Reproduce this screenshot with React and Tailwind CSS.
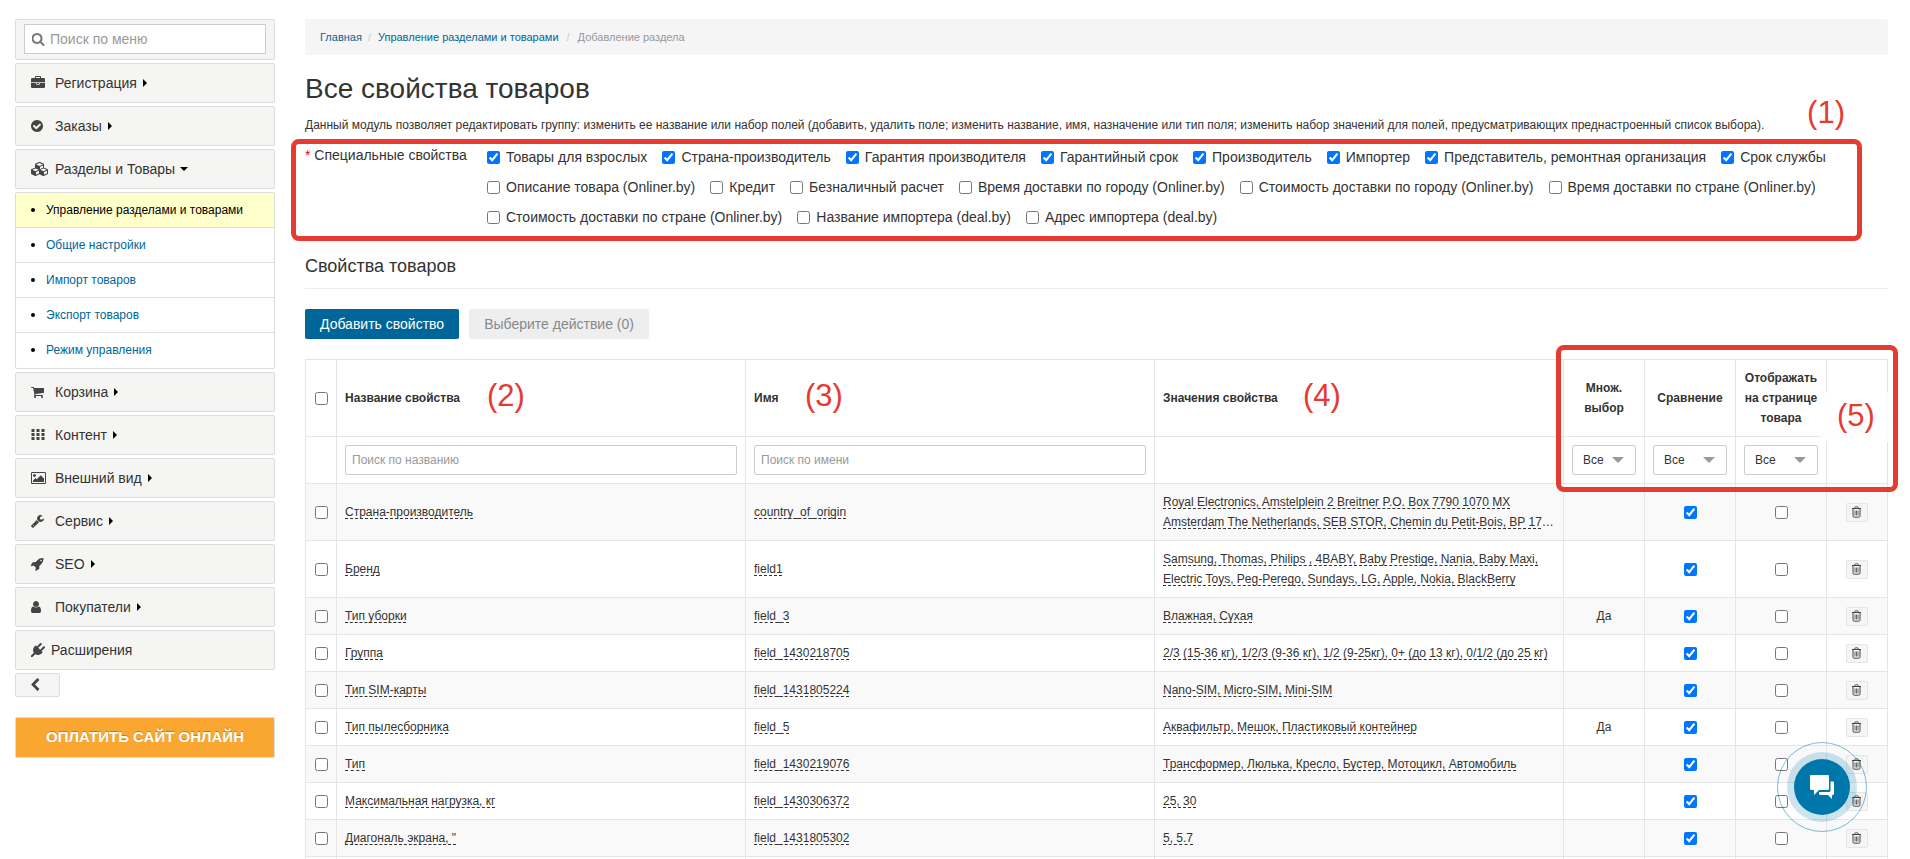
import { useState } from "react";

// иконки меню, сетка 1792 на кегль
const icons = {
  search: {
    box: "128 0 1792 1792",
    d: "M1216 832q0-185-131.5-316.5t-316.5-131.5-316.5 131.5-131.5 316.5 131.5 316.5 316.5 131.5 316.5-131.5 131.5-316.5zm512 832q0 52-38 90t-90 38q-54 0-90-38l-343-342q-179 124-399 124-143 0-273.5-55.5t-225-150-150-225-55.5-273.5 55.5-273.5 150-225 225-150 273.5-55.5 273.5 55.5 225 150 150 225 55.5 273.5q0 220-124 399l343 343q37 37 37 90z",
  },
  briefcase: {
    box: "0 0 1792 1792",
    d: "M640 256h512v-128h-512v128zm1152 640v480q0 66-47 113t-113 47h-1472q-66 0-113-47t-47-113v-480h672v160q0 26 19 45t45 19h320q26 0 45-19t19-45v-160h672zm-768 0v128h-256v-128h256zm768-480v384h-1792v-384q0-66 47-113t113-47h352v-160q0-40 28-68t68-28h576q40 0 68 28t28 68v160h352q66 0 113 47t47 113z",
  },
  check: {
    box: "128 0 1792 1792",
    d: "M1412 734q0-28-18-46l-91-90q-19-19-45-19t-45 19l-408 407-226-226q-19-19-45-19t-45 19l-91 90q-18 18-18 46 0 27 18 45l362 362q19 19 45 19 27 0 46-19l543-543q18-18 18-45zm252 162q0 209-103 385.5t-279.5 279.5-385.5 103-385.5-103-279.5-279.5-103-385.5 103-385.5 279.5-279.5 385.5-103 385.5 103 279.5 279.5 103 385.5z",
  },
  cubes: {
    box: "0 0 2304 1792",
    d: "M640 1632l384-192v-314l-384 164v342zm-64-454l404-173-404-173-404 173zm1088 454l384-192v-314l-384 164v342zm-64-454l404-173-404-173-404 173zm-448-293l384-165v-266l-384 164v267zm-64-379l441-189-441-189-441 189zm1088 518v416q0 36-19 67t-52 47l-448 224q-25 14-57 14t-57-14l-448-224q-4-2-7-4-2 2-7 4l-448 224q-25 14-57 14t-57-14l-448-224q-33-16-52-47t-19-67v-416q0-38 21.5-70t56.5-48l434-186v-400q0-38 21.5-70t56.5-48l448-192q23-10 50-10t50 10l448 192q35 16 56.5 48t21.5 70v400l434 186q36 16 57 48t21 70z",
  },
  cart: {
    box: "64 0 1792 1792",
    d: "M704 1536q0 52-38 90t-90 38-90-38-38-90 38-90 90-38 90 38 38 90zm896 0q0 52-38 90t-90 38-90-38-38-90 38-90 90-38 90 38 38 90zm128-1088v512q0 24-16.5 42.5t-40.5 21.5l-1044 122q13 60 13 70 0 16-24 64h920q26 0 45 19t19 45-19 45-45 19h-1024q-26 0-45-19t-19-45q0-11 8-31.5t16-36 21.5-40 15.5-29.5l-177-823h-204q-26 0-45-19t-19-45 19-45 45-19h256q16 0 28.5 6.5t19.5 15.5 13 24.5 8 26 5.5 29.5 4.5 26h1201q26 0 45 19t19 45z",
  },
  grid: {
    box: "0 0 1792 1792",
    d: "M64 128h384v384h-384zM704 128h384v384h-384zM1344 128h384v384h-384zM64 640h384v384h-384zM704 640h384v384h-384zM1344 640h384v384h-384zM64 1152h384v384h-384zM704 1152h384v384h-384zM1344 1152h384v384h-384z",
  },
  picture: {
    box: "0 0 1920 1792",
    d: "M640 576q0 80-56 136t-136 56-136-56-56-136 56-136 136-56 136 56 56 136zm1024 384v448h-1408v-192l320-320 160 160 512-512zm96-704h-1600q-13 0-22.5 9.5t-9.5 22.5v1216q0 13 9.5 22.5t22.5 9.5h1600q13 0 22.5-9.5t9.5-22.5v-1216q0-13-9.5-22.5t-22.5-9.5zm160 32v1216q0 66-47 113t-113 47h-1600q-66 0-113-47t-47-113v-1216q0-66 47-113t113-47h1600q66 0 113 47t47 113z",
  },
  wrench: {
    box: "64 0 1792 1792",
    d: "M448 1472q0-26-19-45t-45-19-45 19-19 45 19 45 45 19 45-19 19-45zm644-420l-682 682q-37 37-90 37-52 0-91-37l-106-108q-38-36-38-90 0-53 38-91l681-681q39 98 114.5 173.5t173.5 114.5zm634-435q0 39-23 106-47 134-164.5 217.5t-258.5 83.5q-185 0-316.5-131.5t-131.5-316.5 131.5-316.5 316.5-131.5q58 0 121.5 16.5t107.5 46.5q16 11 16 28t-16 28l-293 169v224l193 107q5-3 79-48.5t135.5-81 70.5-35.5q15 0 23.5 10t8.5 25z",
  },
  rocket: {
    box: "64 0 1792 1792",
    d: "M1440 448q0-40-28-68t-68-28-68 28-28 68 28 68 68 28 68-28 28-68zm224-288q0 249-75.5 430.5t-253.5 360.5q-81 80-195 176l-20 379q-2 16-16 26l-384 224q-7 4-16 4-12 0-23-9l-64-64q-13-14-8-32l85-276-281-281-276 85q-3 1-9 1-14 0-23-9l-64-64q-17-19-5-39l224-384q10-14 26-16l379-20q96-114 176-195 188-187 358-258t431-71q14 0 24 9.5t10 22.5z",
  },
  user: {
    box: "256 0 1792 1792",
    d: "M1536 1399q0 109-62.5 187t-150.5 78h-854q-88 0-150.5-78t-62.5-187q0-85 8.5-160.5t31.5-152 58.5-131 94-89 134.5-34.5q131 128 313 128t313-128q76 0 134.5 34.5t94 89 58.5 131 31.5 152 8.5 160.5zm-256-887q0 159-112.5 271.5t-271.5 112.5-271.5-112.5-112.5-271.5 112.5-271.5 271.5-112.5 271.5 112.5 112.5 271.5z",
  },
  plug: {
    box: "0 0 1792 1792",
    d: "M1755 453q37 38 37 90.5t-37 90.5l-401 400 150 150-160 160q-163 163-389.5 186.5t-411.5-100.5l-362 362h-181v-181l362-362q-124-185-100.5-411.5t186.5-389.5l160-160 150 150 400-401q38-37 91-37t90 37 37 90.5-37 90.5l-400 401 234 234 401-400q38-37 91-37t90 37z",
  },
  left: {
    box: "256 0 1792 1792",
    d: "M1427 301l-531 531 531 531q19 19 19 45t-19 45l-166 166q-19 19-45 19t-45-19l-742-742q-19-19-19-45t19-45l742-742q19-19 45-19t45 19l166 166q19 19 19 45t-19 45z",
  },
};

const menuTop = [
  { label: "Регистрация", icon: "briefcase" },
  { label: "Заказы", icon: "check" },
  { label: "Разделы и Товары", icon: "cubes", open: true },
];

const subMenu = [
  "Управление разделами и товарами",
  "Общие настройки",
  "Импорт товаров",
  "Экспорт товаров",
  "Режим управления",
];

const menuBottom = [
  { label: "Корзина", icon: "cart" },
  { label: "Контент", icon: "grid" },
  { label: "Внешний вид", icon: "picture" },
  { label: "Сервис", icon: "wrench" },
  { label: "SEO", icon: "rocket" },
  { label: "Покупатели", icon: "user" },
  { label: "Расширения", icon: "plug", plain: true },
];

const specialProps = [
  ["Товары для взрослых", true],
  ["Страна-производитель", true],
  ["Гарантия производителя", true],
  ["Гарантийный срок", true],
  ["Производитель", true],
  ["Импортер", true],
  ["Представитель, ремонтная организация", true],
  ["Срок службы", true],
  ["Описание товара (Onliner.by)", false],
  ["Кредит", false],
  ["Безналичный расчет", false],
  ["Время доставки по городу (Onliner.by)", false],
  ["Стоимость доставки по городу (Onliner.by)", false],
  ["Время доставки по стране (Onliner.by)", false],
  ["Стоимость доставки по стране (Onliner.by)", false],
  ["Название импортера (deal.by)", false],
  ["Адрес импортера (deal.by)", false],
];

const rows = [
  {
    title: "Страна-производитель",
    name: "country_of_origin",
    values:
      "Royal Electronics, Amstelplein 2 Breitner P.O. Box 7790 1070 MX Amsterdam The Netherlands, SEB STOR, Chemin du Petit-Bois, BP 17",
    more: true,
  },
  {
    title: "Бренд",
    name: "field1",
    values:
      "Samsung, Thomas, Philips , 4BABY, Baby Prestige, Nania, Baby Maxi, Electric Toys, Peg-Perego, Sundays, LG, Apple, Nokia, BlackBerry",
  },
  { title: "Тип уборки", name: "field_3", values: "Влажная, Сухая", multi: true },
  {
    title: "Группа",
    name: "field_1430218705",
    values: "2/3 (15-36 кг), 1/2/3 (9-36 кг), 1/2 (9-25кг), 0+ (до 13 кг), 0/1/2 (до 25 кг)",
  },
  { title: "Тип SIM-карты", name: "field_1431805224", values: "Nano-SIM, Micro-SIM, Mini-SIM" },
  {
    title: "Тип пылесборника",
    name: "field_5",
    values: "Аквафильтр, Мешок, Пластиковый контейнер",
    multi: true,
  },
  {
    title: "Тип",
    name: "field_1430219076",
    values: "Трансформер, Люлька, Кресло, Бустер, Мотоцикл, Автомобиль",
  },
  { title: "Максимальная нагрузка, кг", name: "field_1430306372", values: "25, 30" },
  { title: 'Диагональ экрана, "', name: "field_1431805302", values: "5, 5.7" },
  { title: "", name: "", values: "" },
];

const Icon = ({ name, className = "text-[#444]" }) => (
  <svg
    className={`h-[14px] w-auto shrink-0 ${className}`}
    viewBox={icons[name].box}
    fill="currentColor"
    aria-hidden="true"
  >
    <path d={icons[name].d} />
  </svg>
);

const MenuItem = ({ item }) => (
  <li>
    <a
      href="#"
      className="flex h-10 items-center rounded-xs border border-[#ddd] bg-[#f5f5f3] pl-[15px] text-sm text-[#333]"
    >
      <span className={item.plain ? "w-5" : "w-6"}>
        <Icon name={item.icon} />
      </span>
      {item.label}
      {item.open && (
        <span className="ml-[5px] border-x-4 border-t-4 border-x-transparent border-t-black"></span>
      )}
      {!item.open && !item.plain && (
        <span className="ml-[6px] border-y-4 border-l-4 border-y-transparent border-l-black"></span>
      )}
    </a>
  </li>
);

const Editable = ({ children }) => (
  <span className="cursor-pointer underline decoration-[#333] decoration-dashed decoration-1 underline-offset-2 [text-decoration-skip-ink:none]">
    {children}
  </span>
);

const Mark = ({ children, className }) => (
  <span className={`absolute font-normal text-[31px] leading-8 text-[#e53b30] ${className}`}>
    {children}
  </span>
);

const Filter = ({ label }) => (
  <div className="relative">
    <select
      aria-label={label}
      className="block h-[30px] w-full appearance-none rounded-xs border border-[#ccc] bg-white pl-[10px] text-xs text-[#333]"
    >
      <option>Все</option>
    </select>
    <span className="pointer-events-none absolute right-3 top-3 border-x-6 border-t-6 border-x-transparent border-t-[#999]"></span>
  </div>
);

const TrashIcon = () => (
  <svg className="size-3" viewBox="0 0 12 12" fill="none" stroke="#444" aria-hidden="true">
    <path d="M1 2.5h9M3.5 2.2C3.500 1.200 4 .8 5.500 .8s2 .4 2 1.400" />
    <path d="M2 2.8v7c0 .9.4 1.400 1.200 1.400h4.600c.8 0 1.200-.5 1.200-1.400v-7" />
    <path d="M4 4.500v5M5.500 4.500v5M7 4.500v5" strokeWidth=".8" />
  </svg>
);

const Check = ({ label, defaultChecked }) => (
  <input
    type="checkbox"
    aria-label={label}
    defaultChecked={defaultChecked}
    className="mx-auto block size-[13px]"
  />
);

const Sidebar = () => (
  <aside className="w-[260px] shrink-0">
    <nav>
      <ul className="flex flex-col gap-[3px]">
        <li className="rounded-xs border border-[#ddd] bg-[#f5f5f3] px-2 pt-1 pb-[5px]">
          <label className="flex h-[30px] items-center gap-1 border border-[#ccc] bg-white px-[7px]">
            <Icon name="search" className="text-[#777]" />
            <input
              type="text"
              placeholder="Поиск по меню"
              className="min-w-0 flex-1 text-sm outline-none placeholder:text-[#999]"
            />
          </label>
        </li>
        {menuTop.map((item) => (
          <MenuItem key={item.label} item={item} />
        ))}
        <li>
          <ul className="divide-y divide-[#ddd] rounded-xs border border-[#ddd] bg-white pb-px">
            {subMenu.map((label, i) => (
              <li key={label} className={i === 0 ? "bg-[#ffffcc]" : ""}>
                <a
                  href="#"
                  className={`flex h-[34px] items-center gap-[11px] pl-[15px] text-xs ${
                    i === 0 ? "text-black" : "text-[#069]"
                  }`}
                >
                  <span className="size-1 rounded-full bg-black"></span>
                  {label}
                </a>
              </li>
            ))}
          </ul>
        </li>
        {menuBottom.map((item) => (
          <MenuItem key={item.label} item={item} />
        ))}
      </ul>
    </nav>
    <button
      type="button"
      aria-label="Свернуть меню"
      className="mt-[3px] flex h-6 w-[45px] items-center rounded-xs border border-[#ddd] bg-[#f5f5f5] pl-[14px]"
    >
      <Icon name="left" />
    </button>
    <a
      href="#"
      className="mt-5 flex h-[41px] items-center justify-center rounded-xs border border-[#ddd] bg-[#faa732] text-[15px] font-bold text-white text-shadow-[0_-1px_0_rgba(0,0,0,0.25)]"
    >
      ОПЛАТИТЬ САЙТ ОНЛАЙН
    </a>
  </aside>
);

const PropertiesTable = () => (
  <div className="relative mt-5">
    <table className="w-full table-fixed border-collapse text-xs leading-5 [&_td]:border [&_td]:border-[#e5e5e5] [&_td]:px-2 [&_td]:py-2 [&_th]:border [&_th]:border-[#e5e5e5] [&_th]:px-2 [&_th]:py-2">
      <colgroup>
        <col className="w-[31px]" />
        <col />
        <col />
        <col />
        <col className="w-[81px]" />
        <col className="w-[91px]" />
        <col className="w-[91px]" />
        <col className="w-[61px]" />
      </colgroup>
      <thead>
        <tr>
          <th>
            <Check label="Выбрать все" />
          </th>
          <th className="relative text-left">
            Название свойства
            <Mark className="left-[150px] top-5">(2)</Mark>
          </th>
          <th className="relative text-left">
            Имя
            <Mark className="left-[59px] top-5">(3)</Mark>
          </th>
          <th className="relative text-left">
            Значения свойства
            <Mark className="left-[148px] top-5">(4)</Mark>
          </th>
          <th>Множ. выбор</th>
          <th>Сравнение</th>
          <th className="whitespace-nowrap">
            Отображать
            <br />
            на странице
            <br />
            товара
          </th>
          <th className="relative">
            <Mark className="-left-[7px] top-8 h-[50px] w-[70px] bg-white/85 pt-2 pl-[17px] text-left">(5)</Mark>
          </th>
        </tr>
        <tr>
          <td></td>
          <td>
            <input
              type="text"
              aria-label="Поиск по названию"
              placeholder="Поиск по названию"
              className="block h-[30px] w-full rounded-xs border border-[#ccc] px-[6px] placeholder:text-[#999]"
            />
          </td>
          <td>
            <input
              type="text"
              aria-label="Поиск по имени"
              placeholder="Поиск по имени"
              className="block h-[30px] w-full rounded-xs border border-[#ccc] px-[6px] placeholder:text-[#999]"
            />
          </td>
          <td></td>
          <td>
            <Filter label="Множ. выбор" />
          </td>
          <td>
            <Filter label="Сравнение" />
          </td>
          <td>
            <Filter label="Отображать на странице товара" />
          </td>
          <td></td>
        </tr>
      </thead>
      <tbody>
        {rows.map((row) => (
          <tr key={row.name} className="odd:bg-[#f9f9f9]">
            <td>
              <Check label="Выбрать" />
            </td>
            <td>
              <Editable>{row.title}</Editable>
            </td>
            <td>
              <Editable>{row.name}</Editable>
            </td>
            <td>
              <Editable>{row.values}</Editable>
              {row.more && "…"}
            </td>
            <td className="text-center">{row.multi && "Да"}</td>
            <td>
              <Check label="Сравнение" defaultChecked />
            </td>
            <td>
              <Check label="Отображать на странице товара" />
            </td>
            <td>
              <button
                type="button"
                aria-label="Удалить"
                className="mx-auto flex h-[19px] w-[22px] items-center justify-center rounded-xs border border-[#e5e5e5] bg-[#f5f5f5]"
              >
                <TrashIcon />
              </button>
            </td>
          </tr>
        ))}
      </tbody>
    </table>
    {/* рамка вокруг колонок с фильтрами */}
    <div className="pointer-events-none absolute -right-[10px] -top-[14px] h-[147px] w-[342px] rounded-lg border-5 border-[#e53b30]"></div>
  </div>
);

const ChatButton = () => (
  <div className="fixed bottom-[27px] right-[43px] flex size-[90px] items-center justify-center rounded-full border border-[#0077ab]/50">
    <div className="flex size-[70px] items-center justify-center rounded-full bg-[#0077ab]/20">
      <button
        type="button"
        aria-label="Открыть чат"
        className="flex size-14 items-center justify-center rounded-full bg-[#0077ab]"
      >
        <svg className="size-6" viewBox="0 0 24 24" fill="#fff" aria-hidden="true">
          <path d="M1.2 0h16.600c.7 0 1.200.5 1.200 1.200v12.600c0 .7-.5 1.200-1.200 1.200H9l-5 5v-5H1.200C.5 15 0 14.500 0 13.800V1.200C0 .5.5 0 1.200 0z" />
          <path d="M20.500 6.500h2.300c.7 0 1.200.5 1.200 1.200v11.100c0 .7-.5 1.200-1.200 1.200H22v4l-4-4h-7.800c-.7 0-1.200-.5-1.200-1.200V17h10.300c.7 0 1.200-.5 1.200-1.200z" />
        </svg>
      </button>
    </div>
  </div>
);

export default function App() {
  const [selected] = useState(0);

  return (
    <div className="flex gap-[30px] bg-white pl-[15px] pr-[22px] pt-[19px] font-['Liberation_Sans',Arial,sans-serif] text-[#333]">
      <Sidebar />
      <main className="min-w-0 flex-1">
        <nav className="flex h-9 items-center rounded-xs bg-[#f5f5f5] px-[15px] text-[11px]">
          <a href="#" className="text-[#069]">Главная</a>
          <span className="pl-[6px] pr-[7px] text-[#ccc]">/</span>
          <a href="#" className="text-[#069]">Управление разделами и товарами</a>
          <span className="px-2 text-[#ccc]">/</span>
          <span className="text-[#999]">Добавление раздела</span>
        </nav>

        <h1 className="mt-[14px] text-[28px] leading-10">Все свойства товаров</h1>
        <p className="mt-[6px] text-xs leading-5">
          Данный модуль позволяет редактировать группу: изменить ее название или набор полей (добавить,
          удалить поле; изменить название, имя, назначение или тип поля; изменить набор значений для полей,
          предусматривающих преднастроенный список выбора).
        </p>

        <fieldset className="relative mt-[10px] flex text-sm leading-5">
          <legend className="float-left w-[182px] shrink-0">
            <span className="text-red-600">*</span> Специальные свойства
          </legend>
          <div className="flex flex-1 flex-wrap gap-x-[15px] gap-y-[10px] pt-[2px]">
            {specialProps.map(([label, checked]) => (
              <label key={label} className="flex items-center gap-[6px]">
                <input type="checkbox" defaultChecked={checked} className="size-[13px]" />
                {label}
              </label>
            ))}
          </div>
          <div className="pointer-events-none absolute -left-[14px] -top-[6px] right-[26px] h-[102px] rounded-lg border-5 border-[#e53b30]"></div>
          <Mark className="-top-12 right-[43px]">(1)</Mark>
        </fieldset>

        <h2 className="mt-6 border-b border-[#eee] pb-[7px] text-lg leading-[30px]">Свойства товаров</h2>

        <div className="mt-5 flex gap-[10px] text-sm">
          <button type="button" className="h-[30px] rounded-xs bg-[#069] px-[15px] text-white">
            Добавить свойство
          </button>
          <button type="button" disabled className="h-[30px] rounded-xs bg-[#eee] px-[15px] text-[#888]">
            Выберите действие ({selected})
          </button>
        </div>

        <PropertiesTable />
      </main>
      <ChatButton />
    </div>
  );
}
